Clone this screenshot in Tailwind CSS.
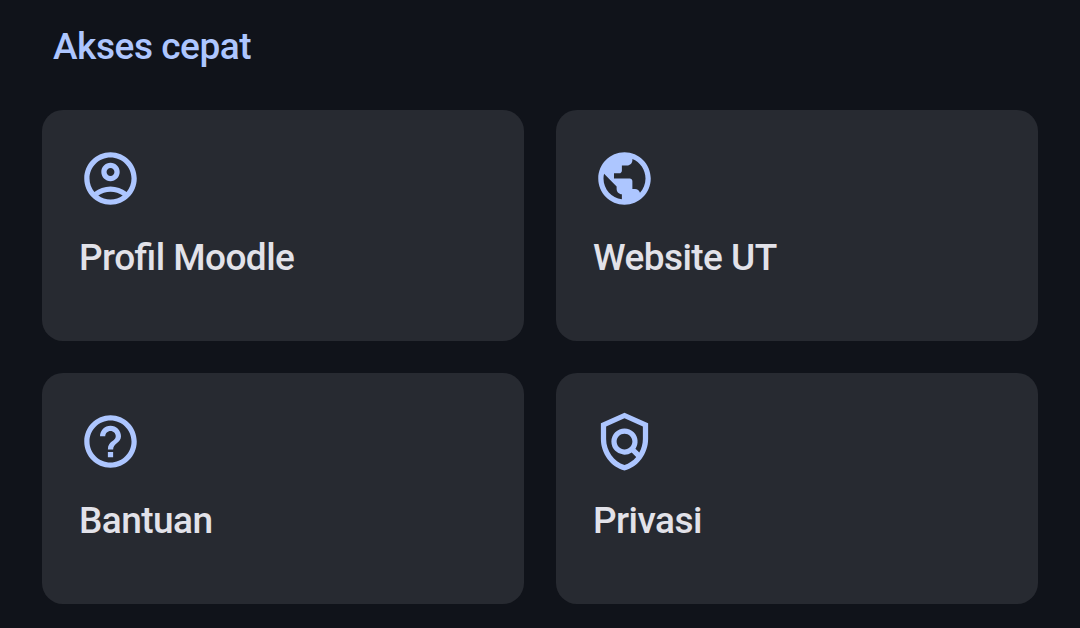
<!DOCTYPE html>
<html lang="id">
<head>
    <meta charset="UTF-8">
    <meta name="viewport" content="width=device-width, initial-scale=1.0">
    <title>Akses cepat</title>
    <script src="https://cdn.jsdelivr.net/npm/@tailwindcss/browser@4"></script>
</head>
<body class="bg-[#10131a] h-screen overflow-hidden font-['Roboto',sans-serif] font-medium text-[37px] leading-[44px] tracking-[-0.55px] [font-feature-settings:'liga']">
    <main class="px-[42px] pt-[25px]">
        <h2 class="pl-[11px] tracking-[-0.45px] text-[#adc6ff]">Akses cepat</h2>

        <div class="mt-[41px] grid grid-cols-2 gap-8">
            <!-- Profil -->
            <a href="#" class="block h-[231px] rounded-[21px] bg-[#272a31] pl-[37px] pt-[37px] text-[#e2e2e9]">
                <svg class="size-[63px] fill-[#adc6ff]" viewBox="0 0 24 24">
                    <path d="M12 2C6.48 2 2 6.48 2 12s4.48 10 10 10 10-4.48 10-10S17.52 2 12 2zM7.35 18.5C8.66 17.56 10.26 17 12 17s3.34.56 4.65 1.5C15.34 19.44 13.74 20 12 20s-3.34-.56-4.65-1.5zm10.79-1.38C16.45 15.8 14.32 15 12 15s-4.45.8-6.14 2.12C4.7 15.73 4 13.95 4 12c0-4.42 3.58-8 8-8s8 3.58 8 8c0 1.95-.7 3.73-1.86 5.12z"/>
                    <path d="M12 6c-1.93 0-3.5 1.57-3.5 3.5S10.07 13 12 13s3.5-1.57 3.5-3.5S13.93 6 12 6zm0 5c-.83 0-1.5-.67-1.5-1.5S11.17 8 12 8s1.5.67 1.5 1.5S12.83 11 12 11z"/>
                </svg>
                <p class="mt-[26px]">Profil Moodle</p>
            </a>

            <!-- Website -->
            <a href="#" class="block h-[231px] rounded-[21px] bg-[#272a31] pl-[37px] pt-[37px] text-[#e2e2e9]">
                <svg class="size-[63px] fill-[#adc6ff]" viewBox="0 0 24 24">
                    <path d="M12 2C6.48 2 2 6.48 2 12s4.48 10 10 10 10-4.48 10-10S17.52 2 12 2zm-1 17.93c-3.95-.49-7-3.85-7-7.93 0-.62.08-1.21.21-1.79L9 15v1c0 1.1.9 2 2 2v1.93zm6.9-2.54c-.26-.81-1-1.39-1.9-1.39h-1v-3c0-.55-.45-1-1-1H8v-2h2c.55 0 1-.45 1-1V7h2c1.1 0 2-.9 2-2v-.41c2.93 1.19 5 4.06 5 7.41 0 2.08-.8 3.97-2.1 5.39z"/>
                </svg>
                <p class="mt-[26px]">Website UT</p>
            </a>

            <!-- Bantuan -->
            <a href="#" class="block h-[231px] rounded-[21px] bg-[#272a31] pl-[37px] pt-[37px] text-[#e2e2e9]">
                <svg class="size-[63px] fill-[#adc6ff]" viewBox="0 0 24 24">
                    <path d="M11 18h2v-2h-2v2zm1-16C6.48 2 2 6.48 2 12s4.48 10 10 10 10-4.48 10-10S17.52 2 12 2zm0 18c-4.41 0-8-3.59-8-8s3.59-8 8-8 8 3.59 8 8-3.59 8-8 8zm0-14c-2.21 0-4 1.79-4 4h2c0-1.1.9-2 2-2s2 .9 2 2c0 2-3 1.75-3 5h2c0-2.25 3-2.5 3-5 0-2.21-1.79-4-4-4z"/>
                </svg>
                <p class="mt-[26px]">Bantuan</p>
            </a>

            <!-- Privasi -->
            <a href="#" class="block h-[231px] rounded-[21px] bg-[#272a31] pl-[37px] pt-[37px] text-[#e2e2e9]">
                <svg class="size-[63px] fill-[#adc6ff]" viewBox="0 0 24 24">
                    <path d="M12 1L3 5v6c0 5.55 3.84 10.74 9 12c5.16-1.26 9-6.45 9-12V5l-9-4zm7 10c0 1.85-.51 3.65-1.38 5.21l-1.45-1.45c1.29-1.94 1.07-4.58-.64-6.29a5.003 5.003 0 0 0-7.07 0a5.003 5.003 0 0 0 0 7.07a4.99 4.99 0 0 0 6.29.64l1.72 1.72c-1.19 1.42-2.73 2.51-4.47 3.04c-4.02-1.25-7-5.42-7-9.94V6.3l7-3.11l7 3.11V11zm-7 4c-1.66 0-3-1.34-3-3s1.34-3 3-3s3 1.34 3 3s-1.34 3-3 3z"/>
                </svg>
                <p class="mt-[26px]">Privasi</p>
            </a>
        </div>
    </main>
</body>
</html>
